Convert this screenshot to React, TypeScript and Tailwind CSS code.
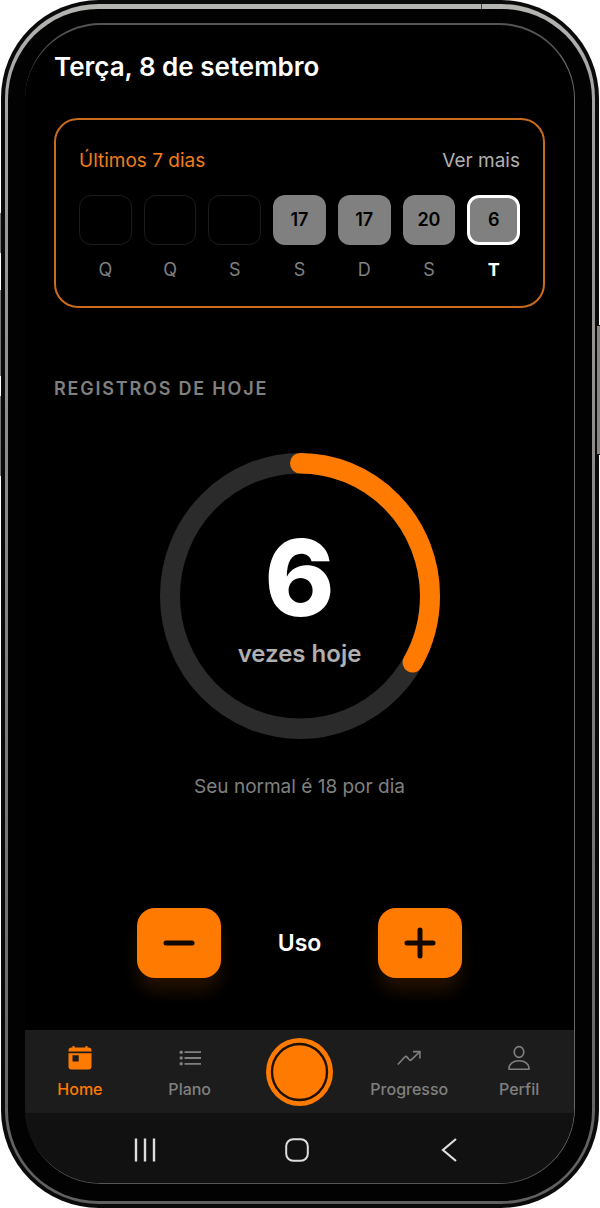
import { useState } from "react";

interface Day {
    letter: string;
    count: number | null;
    today?: boolean;
}

const NORMAL = 18;

const pastDays: Day[] = [
    { letter: "Q", count: null },
    { letter: "Q", count: null },
    { letter: "S", count: null },
    { letter: "S", count: 17 },
    { letter: "D", count: 17 },
    { letter: "S", count: 20 },
];

const DayCell = ({ day }: { day: Day }) => {
    const box = day.today
        ? "border-[3px] border-white bg-[#808080]"
        : day.count === null
        ? "border border-[#1c1c1c]"
        : "bg-[#808080]";

    return (
        <li className="flex flex-col gap-[13px]">
            <div className={`flex h-[50px] items-center justify-center rounded-xl text-lg font-semibold text-black ${box}`}>
                {day.count}
            </div>
            <span className={`text-center text-lg leading-6 ${day.today ? "font-bold text-white" : "text-[#808080]"}`}>
                {day.letter}
            </span>
        </li>
    );
};

const WeekCard = ({ days }: { days: Day[] }) => (
    <section className="mt-[35px] rounded-3xl border-2 border-[#c96a1c] px-[23px] pt-[29px] pb-6">
        <div className="flex items-center justify-between text-[19px] leading-6">
            <h2 className="text-[#f07d1a]">Últimos 7 dias</h2>
            <a href="#historico" className="text-[#b0b0b0]">Ver mais</a>
        </div>
        <ul className="mt-[22px] grid grid-cols-7 gap-3">
            {days.map((day, i) => (
                <DayCell key={i} day={day} />
            ))}
        </ul>
    </section>
);

const Ring = ({ count }: { count: number }) => {
    const progress = Math.min(count / NORMAL, 1);

    return (
        <div className="mx-auto mt-[52px] grid h-[286px] w-[280px] place-items-center">
            <svg viewBox="0 0 280 280" preserveAspectRatio="none" className="col-start-1 row-start-1 h-full w-full" fill="none" strokeWidth="20">
                <circle cx="140" cy="140" r="130" stroke="#2b2b2b" />
                <circle
                    cx="140"
                    cy="140"
                    r="130"
                    stroke="#ff7a00"
                    strokeLinecap="round"
                    pathLength={100}
                    strokeDasharray={`${progress * 100} 200`}
                    transform="rotate(-90 140 140)"
                />
            </svg>
            <div className="col-start-1 row-start-1 flex flex-col items-center pt-2">
                <span className="text-[106px] leading-24 font-extrabold text-white">{count}</span>
                <span className="mt-3 text-2xl leading-8 font-semibold text-[#b0b0b0]">vezes hoje</span>
            </div>
        </div>
    );
};

const StepButton = ({ label, plus, onClick }: { label: string; plus?: boolean; onClick: () => void }) => (
    <button
        type="button"
        aria-label={label}
        onClick={onClick}
        className="flex h-[70px] w-[84px] items-center justify-center rounded-[18px] bg-[#ff7a00] shadow-[0_14px_18px_-2px_rgba(255,122,0,0.15)]"
    >
        <svg width="34" height="34" viewBox="0 0 34 34" fill="none" stroke="#120800" strokeWidth="5" strokeLinecap="round">
            <path d="M4 17H30" />
            {plus && <path d="M17 4V30" />}
        </svg>
    </button>
);

const HomeIcon = () => (
    <svg width="26" height="26" viewBox="0 0 26 26" fill="currentColor">
        <path d="M1.500 6.500V5.500A3 3 0 0 1 4.500 2.500H5.500V1H7.500V2.500H18.500V1H20.500V2.500H21.500A3 3 0 0 1 24.500 5.500V6.500Z" />
        <path fillRule="evenodd" d="M1.500 8.300H24.500V21.500A3 3 0 0 1 21.500 24.500H4.500A3 3 0 0 1 1.500 21.500ZM5.500 10.300V16.500H11.700V10.300Z" />
    </svg>
);

const ListIcon = () => (
    <svg width="26" height="26" viewBox="0 0 26 26" fill="none" stroke="currentColor" strokeWidth="1.8">
        <path d="M7.500 7.200H24M7.500 13H24M7.500 18.800H24" />
        <g fill="currentColor" stroke="none">
            <circle cx="4.200" cy="7.200" r="1.700" />
            <circle cx="4.200" cy="13" r="1.700" />
            <circle cx="4.200" cy="18.800" r="1.700" />
        </g>
    </svg>
);

const TrendIcon = () => (
    <svg width="26" height="26" viewBox="0 0 26 26" fill="none" stroke="currentColor" strokeWidth="1.6">
        <path d="M1.800 19.500L9 11.800Q10 11 10.800 11.900L13.600 15Q14.400 15.700 15.200 14.900L23.500 7" />
        <path d="M17 6.600H23.900V13.500" />
    </svg>
);

const ProfileIcon = () => (
    <svg width="26" height="26" viewBox="0 0 26 26" fill="none" stroke="currentColor" strokeWidth="1.6">
        <ellipse cx="13" cy="7" rx="4.800" ry="5.400" />
        <path d="M3 24.200C2.500 19 7 15.800 13 15.800S23.500 19 23 24.200Z" strokeLinejoin="round" />
    </svg>
);

const TabLink = ({ label, icon, active }: { label: string; icon: React.ReactNode; active?: boolean }) => (
    <a
        href={`#${label.toLowerCase()}`}
        className={`flex flex-col items-center gap-[6px] pt-0.5 text-base leading-6 font-medium ${active ? "text-[#ff7a00]" : "text-[#808080]"}`}
    >
        {icon}
        {label}
    </a>
);

const TabBar = ({ onAdd }: { onAdd: () => void }) => (
    <nav className="grid h-[83px] grid-cols-5 items-center bg-[#1c1c1c]">
        <TabLink label="Home" icon={<HomeIcon />} active />
        <TabLink label="Plano" icon={<ListIcon />} />
        <button type="button" aria-label="Registrar" onClick={onAdd} className="mx-auto">
            <svg width="67" height="68" viewBox="0 0 67 68">
                <ellipse cx="33.500" cy="34" rx="33.500" ry="34" fill="#ff7a00" />
                <ellipse cx="33.500" cy="34" rx="27.500" ry="28" fill="#ff7a00" stroke="#1c1208" strokeWidth="2.400" />
            </svg>
        </button>
        <TabLink label="Progresso" icon={<TrendIcon />} />
        <TabLink label="Perfil" icon={<ProfileIcon />} />
    </nav>
);

const SystemBar = () => (
    <div className="grid h-[70px] grid-cols-3 place-items-center bg-[#111111] pt-1 pr-12 pl-11">
        <button type="button" aria-label="Recentes">
            <svg width="24" height="24" viewBox="0 0 24 24" stroke="#dedede" strokeWidth="2.400">
                <path d="M3 .5V23.500M12 .5V23.500M21 .5V23.500" />
            </svg>
        </button>
        <button type="button" aria-label="Início">
            <svg width="24" height="24" viewBox="0 0 24 24" fill="none" stroke="#dedede" strokeWidth="2">
                <rect x="1.200" y="1.200" width="21.600" height="21.600" rx="7" />
            </svg>
        </button>
        <button type="button" aria-label="Voltar">
            <svg width="24" height="24" viewBox="0 0 24 24" fill="none" stroke="#dedede" strokeWidth="2.200">
                <path d="M18 1L5 12L18 23" />
            </svg>
        </button>
    </div>
);

const PhoneFrame = ({ children }: { children: React.ReactNode }) => (
    <div className="relative bg-white px-px">
        <div className="rounded-[98px] bg-[#0a0a0a] px-1 py-1">
            <div className="rounded-[94px] bg-linear-to-b from-[#b4b6b2] via-[#a0a0a0] via-10% to-[#606060] px-[3px] pt-[5px] pb-[3px]">
                <div className="rounded-[90px] bg-[#020202] px-[17px] pt-[14px] pb-[17px]">
                    <div className="overflow-hidden rounded-[76px] border-t-2 border-r border-b border-t-[#555] border-r-[#666] border-b-[#555] bg-black">
                        {children}
                    </div>
                </div>
            </div>
        </div>
        {/* side keys */}
        <span className="absolute top-[213px] left-0 h-10 w-px bg-[#777]" />
        <span className="absolute top-[290px] left-0 h-[86px] w-px bg-[#777]" />
        <span className="absolute top-[396px] left-0 h-20 w-px bg-[#777]" />
        <span className="absolute top-[325px] right-0 h-[130px] w-[3px] border-y border-black bg-[#8a8580]" />
        {/* antenna line */}
        <span className="absolute top-1 right-[118px] h-[5px] w-px bg-[#444]" />
    </div>
);

export default function App() {
    const [count, setCount] = useState<number>(6);

    const days: Day[] = [...pastDays, { letter: "T", count, today: true }];
    const add = () => setCount((c) => c + 1);
    const remove = () => setCount((c) => Math.max(0, c - 1));

    return (
        <div className="font-[Inter,sans-serif]">
            <PhoneFrame>
                <main className="px-[29px] pt-[26px] pb-[52px]">
                    <h1 className="text-[26px] leading-8 font-semibold text-white">Terça, 8 de setembro</h1>
                    <WeekCard days={days} />
                    <h2 className="mt-[69px] text-lg leading-6 font-semibold tracking-widest text-[#808080]">REGISTROS DE HOJE</h2>
                    <Ring count={count} />
                    <p className="mt-9 text-center text-[19px] leading-6 text-[#808080]">Seu normal é {NORMAL} por dia</p>
                    <div className="mt-[109px] flex items-center justify-between px-[83px]">
                        <StepButton label="Diminuir" onClick={remove} />
                        <span className="text-[23px] leading-8 font-semibold text-white">Uso</span>
                        <StepButton label="Aumentar" plus onClick={add} />
                    </div>
                </main>
                <TabBar onAdd={add} />
                <SystemBar />
            </PhoneFrame>
        </div>
    );
}
